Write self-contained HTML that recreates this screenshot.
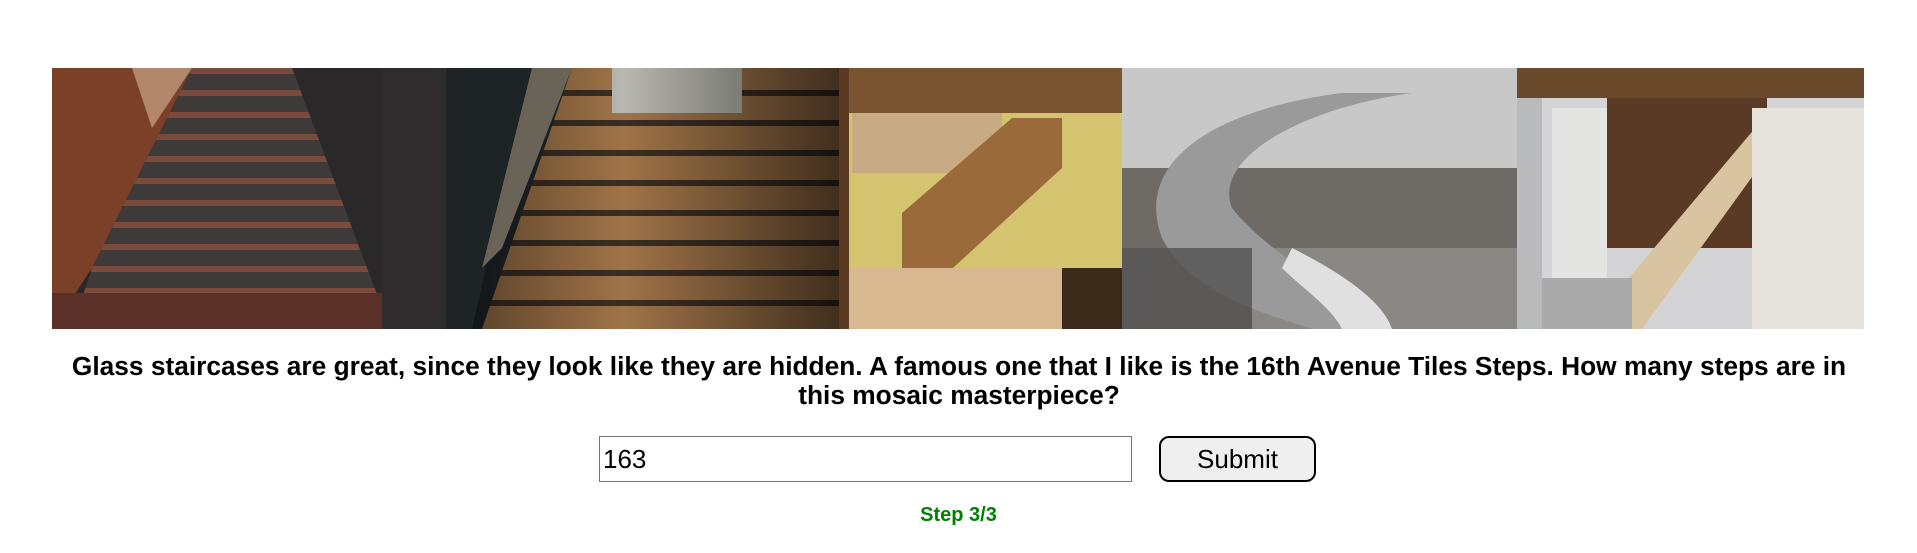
<!DOCTYPE html>
<html><head><meta charset="utf-8"><style>
html,body{margin:0;padding:0;background:#fff;width:1917px;height:553px;overflow:hidden;font-family:"Liberation Sans",Arial,sans-serif}
.strip{position:absolute;left:52px;top:68px;width:1812px;height:261px}
.q{position:absolute;left:64px;top:352px;width:1790px;text-align:center;font-weight:bold;font-size:26.3px;line-height:29px;color:#000}
input{position:absolute;left:599px;top:436px;width:533px;height:46px;box-sizing:border-box;border:1px solid #767676;font-family:"Liberation Sans",Arial,sans-serif;font-size:26px;padding:0 3px;margin:0;outline:none}
button{position:absolute;left:1159px;top:436px;width:157px;height:46px;box-sizing:border-box;border:2px solid #000;border-radius:10px;background:#efefef;font-family:"Liberation Sans",Arial,sans-serif;font-size:26px;margin:0}
.s{position:absolute;left:0;width:1917px;top:504px;text-align:center;color:#008000;font-weight:bold;font-size:20px}
</style></head><body>
<svg class="strip" width="1812" height="261" viewBox="0 0 1812 261">
<defs>
<pattern id="st1" width="10" height="22" patternUnits="userSpaceOnUse"><rect width="10" height="22" fill="#3e3a3a"/><rect width="10" height="6" fill="#7a4a3c"/></pattern>
<pattern id="st2" width="10" height="30" patternUnits="userSpaceOnUse"><rect width="10" height="30" fill="#a07448"/><rect y="22" width="10" height="6" fill="#3a2e24"/></pattern>
<linearGradient id="g2" x1="0" x2="1"><stop offset="0" stop-color="#000" stop-opacity=".5"/><stop offset=".45" stop-color="#000" stop-opacity="0"/><stop offset="1" stop-color="#000" stop-opacity=".6"/></linearGradient>
</defs>
<!-- image 1 -->
<rect x="0" y="0" width="394" height="261" fill="#2a2828"/>
<polygon points="0,0 140,0 40,200 0,261" fill="#7a4028"/>
<polygon points="140,0 240,0 330,240 20,261 40,200" fill="url(#st1)"/>
<rect x="0" y="225" width="330" height="36" fill="#5a3028"/>
<rect x="330" y="0" width="64" height="261" fill="#2e2c2c"/>
<polygon points="80,0 140,0 100,60" fill="#d8b898" opacity=".6"/>
<!-- image 2 -->
<rect x="394" y="0" width="393" height="261" fill="#22272a"/>
<polygon points="430,261 520,0 787,0 787,261" fill="url(#st2)"/>
<rect x="560" y="0" width="130" height="45" fill="#b8b8b0"/>
<rect x="394" y="0" width="393" height="261" fill="url(#g2)"/>
<polygon points="394,0 480,0 420,261 394,261" fill="#1e2326"/>
<polygon points="480,0 520,0 450,180 430,200" fill="#6a6458"/>
<!-- image 3 -->
<rect x="787" y="0" width="283" height="261" fill="#d4c470"/>
<rect x="787" y="0" width="283" height="45" fill="#7a5430"/>
<rect x="800" y="45" width="150" height="60" fill="#c8aa84"/>
<polygon points="850,145 960,50 1010,50 1010,100 890,210 850,210" fill="#9a6a3a"/>
<rect x="787" y="200" width="283" height="61" fill="#d8b890"/>
<rect x="1010" y="200" width="60" height="61" fill="#3a2a1a"/>
<rect x="787" y="0" width="10" height="261" fill="#5a3a20"/>
<!-- image 4 -->
<rect x="1070" y="0" width="395" height="261" fill="#c8c8c8"/>
<rect x="1070" y="100" width="395" height="161" fill="#6e6a66"/>
<rect x="1070" y="180" width="395" height="81" fill="#8a8884"/>
<path d="M1290,25 C1170,40 1080,90 1110,170 C1140,230 1230,250 1260,261 L1330,261 C1300,230 1220,190 1180,140 C1160,90 1250,40 1360,25 Z" fill="#9a9a9a"/>
<path d="M1240,180 C1280,200 1330,230 1340,261 L1290,261 C1280,240 1250,220 1230,200 Z" fill="#e0e0e0"/>
<rect x="1070" y="180" width="130" height="81" fill="#3a3a3a" opacity=".6"/>
<!-- image 5 -->
<rect x="1465" y="0" width="347" height="261" fill="#d4d4d6"/>
<rect x="1465" y="0" width="347" height="30" fill="#6a4a2a"/>
<rect x="1465" y="30" width="25" height="231" fill="#b8babc"/>
<rect x="1555" y="30" width="160" height="150" fill="#5a3a24"/>
<rect x="1500" y="40" width="55" height="180" fill="#e4e4e2"/>
<polygon points="1560,230 1720,40 1750,40 1590,261 1560,261" fill="#d8c4a0"/>
<rect x="1700" y="40" width="112" height="221" fill="#e6e2dc"/>
<rect x="1490" y="210" width="90" height="51" fill="#aaaaaa"/>
</svg>
<div class="q">Glass staircases are great, since they look like they are hidden. A famous one that I like is the 16th Avenue Tiles Steps. How many steps are in<br>this mosaic masterpiece?</div>
<input type="text" value="163">
<button>Submit</button>
<div class="s">Step 3/3</div>
</body></html>
